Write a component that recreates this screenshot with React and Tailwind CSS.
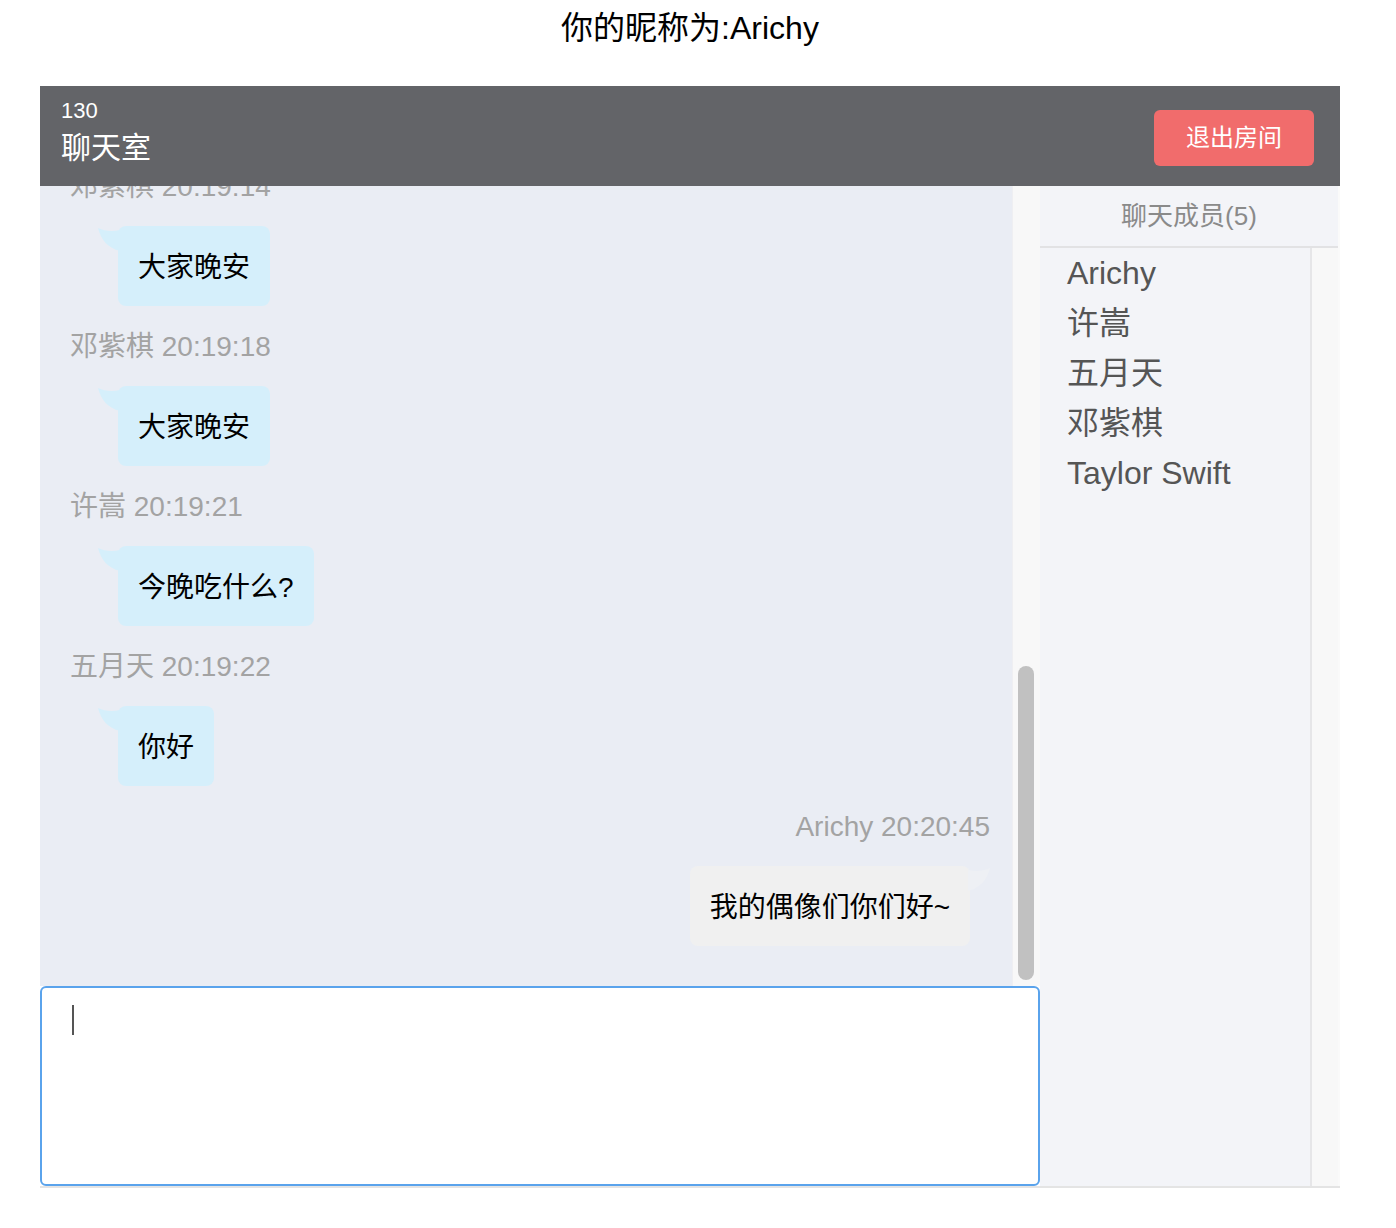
const messages = [
  { name: '邓紫棋', time: '20:19:14', text: '大家晚安' },
  { name: '邓紫棋', time: '20:19:18', text: '大家晚安' },
  { name: '许嵩', time: '20:19:21', text: '今晚吃什么?' },
  { name: '五月天', time: '20:19:22', text: '你好' },
  { name: 'Arichy', time: '20:20:45', text: '我的偶像们你们好~', mine: true },
];

const members = ['Arichy', '许嵩', '五月天', '邓紫棋', 'Taylor Swift'];

function Tail({ mine, color }) {
  // little horn on the top corner of a bubble
  return (
    <svg
      width="22"
      height="26"
      viewBox="0 0 22 26"
      className={`absolute top-0 ${mine ? '-right-[20px] -scale-x-100' : '-left-[20px]'}`}
    >
      <path d="M0 2 C3 14 10 22 22 25 L22 4 C14 6 6 5 0 2 Z" fill={color} />
    </svg>
  );
}

function Message({ msg }) {
  if (msg.mine) {
    return (
      <div className="flex flex-col items-end pr-[22px]">
        <div className="h-[40px] pt-[1px] leading-[40px] text-[28px] text-[#a3a3a3]">
          {msg.name} {msg.time}
        </div>
        <div className="relative mt-[20px] mb-[20px] mr-[20px] h-[80px] pt-[4px] px-[20px] leading-[76px] text-[28px] text-black bg-[#f0f0f0] rounded-[8px]">
          <Tail mine color="#eef0f4" />
          {msg.text}
        </div>
      </div>
    );
  }
  return (
    <div className="flex flex-col items-start pl-[30px]">
      <div className="h-[40px] pt-[1px] leading-[40px] text-[28px] text-[#a3a3a3]">
        {msg.name} {msg.time}
      </div>
      <div className="relative mt-[20px] mb-[20px] ml-[48px] h-[80px] pt-[4px] px-[20px] leading-[76px] text-[28px] text-black bg-[#d5effb] rounded-[8px]">
        <Tail color="#d5effb" />
        {msg.text}
      </div>
    </div>
  );
}

export default function App() {
  return (
    <div className="w-[1396px] min-h-[1228px] bg-white font-['Liberation_Sans','Noto_Sans_CJK_SC',sans-serif]">
      <div className="w-[1300px] ml-[40px]">
        <h1 className="h-[56px] leading-[56px] text-center text-[32px] text-black">你的昵称为:Arichy</h1>

        <div className="mt-[30px] border-b-2 border-[#e4e4e4]">
          {/* header */}
          <div className="h-[100px] bg-[#636468] flex items-center justify-between pl-[21px] pr-[26px]">
            <div className="self-start pt-[12px] text-white">
              <div className="text-[22px] leading-[26px]">130</div>
              <div className="text-[30px] leading-[48px]">聊天室</div>
            </div>
            <button className="w-[160px] h-[56px] mt-[4px] rounded-[6px] bg-[#f16c6c] text-white text-[24px]">
              退出房间
            </button>
          </div>

          <div className="flex h-[1000px]">
            {/* left column */}
            <div className="w-[1000px] flex flex-col">
              <div className="h-[800px] flex">
                <div className="w-[972px] bg-[#eaedf4] overflow-hidden flex flex-col justify-end pb-[20px]">
                  {messages.map((m, i) => (
                    <Message key={i} msg={m} />
                  ))}
                </div>
                <div className="w-[28px] bg-[#f8f8f8] border-l border-[#efeff2] pt-[480px] pl-[5px]">
                  <div className="w-[16px] h-[314px] rounded-full bg-[#c1c1c1]" />
                </div>
              </div>
              <div className="h-[200px] bg-white border-2 border-[#5aa3ec] rounded-[6px] pl-[30px] pt-[17px]">
                <div className="w-[2px] h-[30px] bg-[#555]" />
              </div>
            </div>

            {/* members */}
            <div className="w-[300px] flex flex-col bg-[#f3f4f8] border-r-2 border-[#fafafa]">
              <div className="h-[62px] border-b-2 border-[#e2e2e4] text-center leading-[60px] text-[26px] text-[#8a8a8a]">
                聊天成员(5)
              </div>
              <div className="flex flex-1">
                <div className="w-[272px] border-r-2 border-[#e6e6e8] pl-[27px]">
                  {members.map((m) => (
                    <div key={m} className="h-[50px] leading-[50px] text-[32px] text-[#555]">
                      {m}
                    </div>
                  ))}
                </div>
                <div className="flex-1 bg-[#f8f8f8]" />
              </div>
            </div>
          </div>
        </div>
      </div>
    </div>
  );
}
